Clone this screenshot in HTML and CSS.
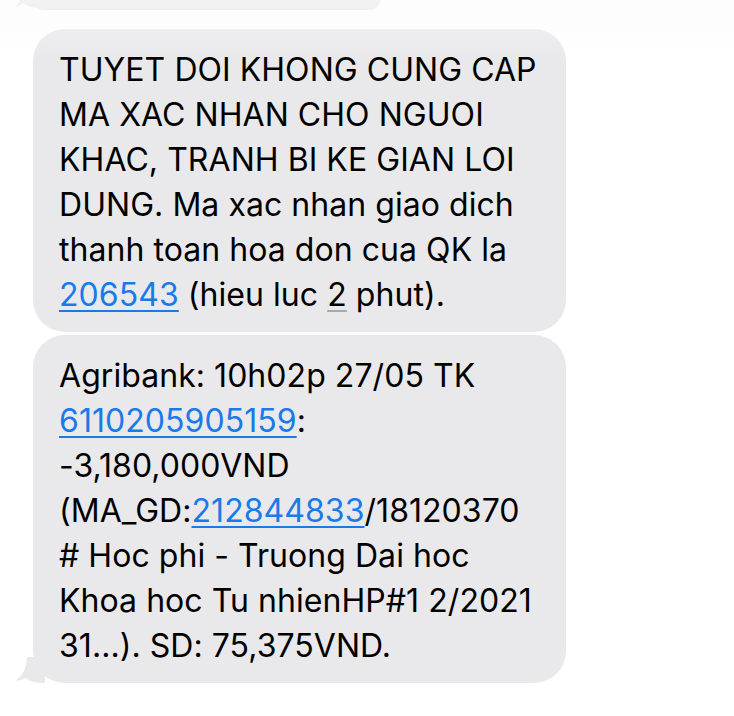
FILE: index.html
```html
<!DOCTYPE html>
<html lang="vi">
<head>
<meta charset="utf-8">
<link rel="stylesheet" href="styles.css">
</head>
<body>
<div class="screen">
  <div class="topfade"></div>
  <div class="thread">
    <div class="bubble prev">
      <svg class="tail tail-prev" width="24" height="14" viewBox="0 0 24 14"><path d="M24 0 L24 12 C18 12 12 10 8 7 C5 10 2 11 0 11 C4 8 6 4 6 0 Z" fill="#e6e8ec"/></svg>
    </div>
    <div class="bubble">TUYET DOI KHONG CUNG CAP<br>MA XAC NHAN CHO NGUOI<br>KHAC, TRANH BI KE GIAN LOI<br>DUNG. Ma xac nhan giao dich<br>thanh toan hoa don cua QK la<br><span class="link">206543</span> (hieu luc <span class="detect">2</span> phut).</div>
    <div class="bubble last">Agribank: 10h02p 27/05 TK<br><span class="link">6110205905159</span>:<br>-3,180,000VND<br>(MA_GD:<span class="link">212844833</span>/18120370<br># Hoc phi - Truong Dai hoc<br>Khoa hoc Tu nhienHP#1 2/2021<br>31...). SD: 75,375VND.
      <svg class="tail tail-last" width="30" height="26" viewBox="0 0 30 26"><path d="M30 0 L30 26 C22 26 15 25 10 21 C7 23 3 24 0 24 C7 19 12 12 12 0 Z" fill="#e9e9eb"/></svg>
    </div>
  </div>
</div>
</body>
</html>
```
FILE: styles.css
```css
html, body {
  margin: 0;
  padding: 0;
  background: #ffffff;
}
.screen {
  position: relative;
  width: 734px;
  height: 716px;
  overflow: hidden;
  background: #ffffff;
}
.topfade {
  position: absolute;
  left: 0;
  top: 0;
  width: 734px;
  height: 60px;
  background: linear-gradient(to bottom, rgba(250,250,250,0.55), rgba(255,255,255,0));
  z-index: 2;
  pointer-events: none;
}
.thread {
  display: flex;
  flex-direction: column;
  align-items: flex-start;
  padding-left: 33px;
}
.bubble {
  position: relative;
  background: #e9e9eb;
  border-radius: 32px;
  width: 533px;
  box-sizing: border-box;
  padding: 18px 6px 15px 26px;
  font-family: Inter, "Liberation Sans", sans-serif;
  font-size: 32px;
  letter-spacing: 0.05px;
  line-height: 45px;
  color: #000000;
  margin-top: 3px;
}
.bubble.prev {
  width: 347px;
  height: 10px;
  padding: 0;
  margin-top: 0;
  border-radius: 0 0 20px 20px;
  background: #e6e8ec;
}
.bubble.prev + .bubble {
  margin-top: 19px;
}
.link {
  color: #1a7ae8;
  text-decoration: underline;
  text-decoration-thickness: 2px;
  text-underline-offset: 4px;
}
.detect {
  text-decoration: underline;
  text-decoration-color: #a9a9ad;
  text-decoration-thickness: 2px;
  text-underline-offset: 4px;
}
.tail {
  position: absolute;
  display: block;
}
.tail-prev {
  left: -18px;
  bottom: 0;
}
.tail-last {
  left: -18px;
  bottom: 0;
}
```
